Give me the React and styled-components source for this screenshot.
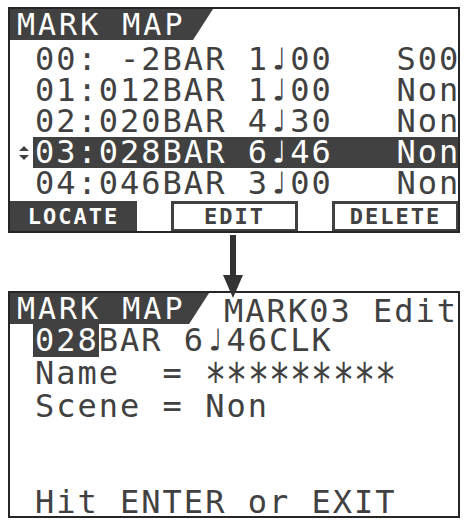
import React from 'react'
import styled, { createGlobalStyle } from 'styled-components'

const ink = '#414141'

const GlobalStyle = createGlobalStyle`
    body{
        margin: 0;
        background: #fff;
        font-family: 'DejaVu Sans Mono', 'DejaVu Sans', monospace;
    }
`

const Page = styled.div`
    width: 452px;
    padding: 7px 0 0 8px;
`

const Screen = styled.div`
    box-sizing: border-box;
    height: ${p => p.$height}px;
    border: 2px solid #262626;
    background: #fff;
    display: flex;
    flex-direction: column;
    overflow: hidden;
`

const Header = styled.div`
    display: flex;
    height: 31px;
    flex-shrink: 0;
`

const Tag = styled.div`
    box-sizing: border-box;
    width: 203px;
    padding-left: 7px;
    background: ${ink};
    color: #fff;
    font-size: 30px;
    line-height: 31px;
    letter-spacing: 3px;
    white-space: pre;
    clip-path: polygon(0 0, 100% 0, calc(100% - 20px) 100%, 0 100%);
`

const Title = styled.div`
    margin-left: 15px;
    padding-top: 3px;
    color: ${ink};
    font-size: 32px;
    line-height: 31px;
    letter-spacing: 2px;
    white-space: pre;
`

const List = styled.div`
    display: flex;
    flex-direction: column;
    padding-top: ${p => p.$top || 0}px;
`

const Row = styled.div`
    display: grid;
    grid-template-columns: 23px 1fr;
    height: ${p => p.$h || 31}px;
`

const Marker = styled.div`
    display: flex;
    align-items: center;
    justify-content: flex-end;
    padding-right: 3px;
`

const Line = styled.div`
    padding-left: 2px;
    font-size: 32px;
    line-height: ${p => p.$h || 31}px;
    letter-spacing: 2px;
    white-space: pre;
    overflow-x: clip;
    background: ${p => (p.$selected ? ink : 'transparent')};
    color: ${p => (p.$selected ? '#fff' : ink)};
`

const Note = styled.span`
    display: inline-block;
    width: calc(0.602em + 2px);
    letter-spacing: 0;
`

const Star = styled.span`
    display: inline-block;
    width: calc(0.602em + 2px);
    letter-spacing: 0;
    text-align: center;
    vertical-align: top;
    transform: translateY(7px) scale(1.1, 1.45);
`

const Cursor = styled.span`
    display: inline-block;
    background: ${ink};
    color: #fff;
    margin-left: -2px;
    padding-left: 2px;
`

const ButtonBar = styled.div`
    display: grid;
    grid-template-columns: repeat(3, 127px);
    column-gap: 34px;
    height: 30px;
    margin-top: 2px;
`

const SoftKey = styled.div`
    box-sizing: border-box;
    display: flex;
    align-items: center;
    justify-content: center;
    border: 3px solid ${ink};
    background: ${p => (p.$filled ? ink : '#fff')};
    color: ${p => (p.$filled ? '#fff' : ink)};
    font-size: 22px;
    font-weight: bold;
    letter-spacing: 2px;
`

const Connector = styled.div`
    position: relative;
    height: 58px;
`

const ArrowSvg = styled.svg`
    position: absolute;
    left: 215px;
    top: 2px;
    z-index: 2;
`

const Footer = styled.div`
    margin-top: auto;
`

const marks = [
    ['00: -2BAR 1', '00   S00'],
    ['01:012BAR 1', '00   Non'],
    ['02:020BAR 4', '30   Non'],
    ['03:028BAR 6', '46   Non'],
    ['04:046BAR 3', '00   Non'],
]

function UpDown() {
    return (
        <svg width="12" height="16" viewBox="0 0 12 16">
            <polygon points="1,6 11,6 6,1" fill={ink} />
            <polygon points="1,10 11,10 6,15" fill={ink} />
        </svg>
    )
}

export default function App() {
    return (
        <Page>
            <GlobalStyle />
            <Screen $height={226}>
                <Header>
                    <Tag>MARK MAP</Tag>
                </Header>
                <List $top={4}>
                    {marks.map(([a, b], i) => (
                        <Row key={i}>
                            <Marker>{i === 3 && <UpDown />}</Marker>
                            <Line $selected={i === 3}>
                                {a}<Note>♩</Note>{b}
                            </Line>
                        </Row>
                    ))}
                </List>
                <ButtonBar>
                    <SoftKey $filled>LOCATE</SoftKey>
                    <SoftKey>EDIT</SoftKey>
                    <SoftKey>DELETE</SoftKey>
                </ButtonBar>
            </Screen>

            <Connector>
                <ArrowSvg width="20" height="65" viewBox="0 0 20 65">
                    <rect x="7" y="0" width="6" height="42" fill="#333" />
                    <polygon points="0,40 20,40 10,63" fill="#333" />
                </ArrowSvg>
            </Connector>

            <Screen $height={227}>
                <Header>
                    <Tag>MARK MAP</Tag>
                    <Title>MARK03 Edit</Title>
                </Header>
                <List>
                    <Row $h={33}>
                        <Marker />
                        <Line $h={33}>
                            <Cursor>028</Cursor>BAR 6<Note>♩</Note>46CLK
                        </Line>
                    </Row>
                    <Row $h={33}>
                        <Marker />
                        <Line $h={33}>
                            {'Name  = '}
                            {Array.from({ length: 9 }).map((_, i) => (
                                <Star key={i}>*</Star>
                            ))}
                        </Line>
                    </Row>
                    <Row $h={33}>
                        <Marker />
                        <Line $h={33}>Scene = Non</Line>
                    </Row>
                </List>
                <Footer>
                    <Row $h={28}>
                        <Marker />
                        <Line $h={28}>Hit ENTER or EXIT</Line>
                    </Row>
                </Footer>
            </Screen>
        </Page>
    )
}
